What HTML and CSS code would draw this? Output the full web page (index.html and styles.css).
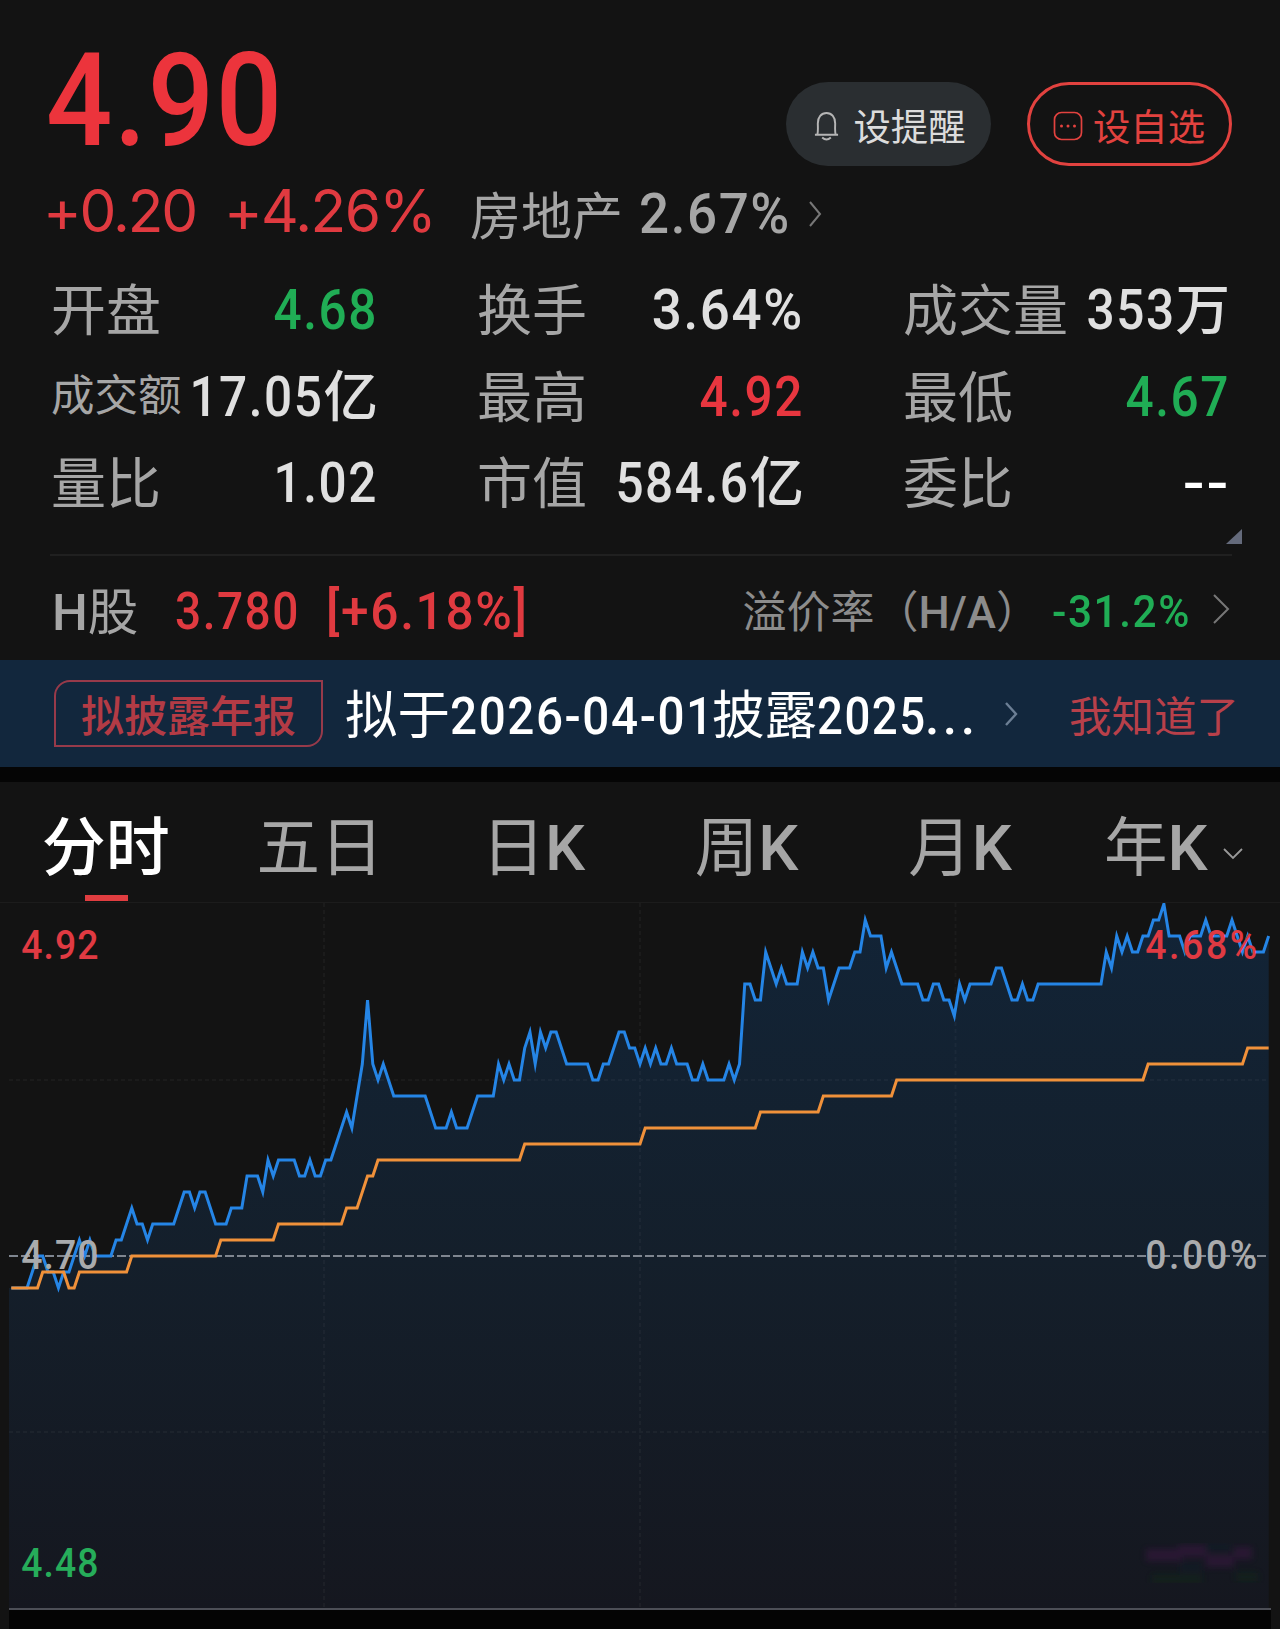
FILE: index.html
```
<!DOCTYPE html>
<html lang="zh-CN">
<head>
<meta charset="utf-8">
<title>行情</title>
<link rel="stylesheet" href="styles.css">
</head>
<body>
<main class="quote">
  <header class="summary">
    <div class="price num">4.90</div>
    <div class="actions">
      <button class="pill pill-solid">
        <svg class="bell" viewBox="0 0 28 32"><path d="M2 24.5H26M4.5 24.5C5.500 21 5 17 5 12.500C5 6.500 8.500 2 14 2S23 6.500 23 12.500C23 17 22.500 21 23.500 24.500M9.500 27.500Q14 31.500 18.500 27.500" fill="none" stroke="currentColor" stroke-width="2"/></svg>
        <span>设提醒</span>
      </button>
      <button class="pill pill-outline">
        <svg class="box" viewBox="0 0 30 30"><rect x="1.500" y="1.500" width="27" height="27" rx="7" fill="none" stroke="currentColor" stroke-width="1.700"/><g fill="currentColor"><circle cx="8.500" cy="15" r="1.500"/><circle cx="15" cy="15" r="1.500"/><circle cx="21.500" cy="15" r="1.500"/></g></svg>
        <span>设自选</span>
      </button>
    </div>
  </header>
  <div class="change-row">
    <span class="change">+0.20</span>
    <span class="change change-pct">+4.26%</span>
    <span class="sector">房地产</span>
    <span class="sector-val num">2.67%</span>
    <svg class="sector-arrow" viewBox="0 0 14 28"><path d="M2 2L12 14L2 26" fill="none" stroke="#777" stroke-width="2"/></svg>
  </div>

  <section class="stats">
    <div class="stat"><span class="label">开盘</span><span class="value down"><span class="num fig">4.68</span></span></div>
    <div class="stat"><span class="label">换手</span><span class="value"><span class="num fig fig-pct">3.64%</span></span></div>
    <div class="stat"><span class="label">成交量</span><span class="value"><span class="num fig">353</span>万</span></div>
    <div class="stat"><span class="label label-small">成交额</span><span class="value"><span class="num fig">17.05</span>亿</span></div>
    <div class="stat"><span class="label">最高</span><span class="value up"><span class="num fig">4.92</span></span></div>
    <div class="stat"><span class="label">最低</span><span class="value down"><span class="num fig">4.67</span></span></div>
    <div class="stat"><span class="label">量比</span><span class="value"><span class="num fig">1.02</span></span></div>
    <div class="stat"><span class="label">市值</span><span class="value"><span class="num fig">584.6</span>亿</span></div>
    <div class="stat"><span class="label">委比</span><span class="value dashes"><span class="num fig">--</span></span></div>
  </section>
  <div class="expand"><svg viewBox="0 0 16 15"><path d="M16 0V15H0Z" fill="#646a7b"/></svg></div>

  <section class="hshare">
    <span class="h-name"><b>H</b>股</span>
    <span class="h-price num">3.780</span>
    <span class="h-pct num">[+6.18%]</span>
    <span class="h-label">溢价率（<b>H/A</b>）</span>
    <span class="h-prem num">-31.2%</span>
    <svg class="h-arrow" viewBox="0 0 18 32"><path d="M2 2L16 16L2 30" fill="none" stroke="#777" stroke-width="2"/></svg>
  </section>

  <section class="notice">
    <span class="tag">拟披露年报</span>
    <span class="message">拟于<span class="num date">2026-04-01</span>披露<span class="num year">2025</span><span class="dots">...</span></span>
    <svg class="n-arrow" viewBox="0 0 14 26"><path d="M2 2L12 13L2 24" fill="none" stroke="#6c7f95" stroke-width="2.400"/></svg>
    <span class="dismiss">我知道了</span>
  </section>

  <nav class="tabs">
    <span class="tab active">分时</span>
    <span class="tab">五日</span>
    <span class="tab">日<b>K</b></span>
    <span class="tab">周<b>K</b></span>
    <span class="tab">月<b>K</b></span>
    <span class="tab">年<b>K</b><svg class="caret" viewBox="0 0 20 12"><path d="M1 1L10 10L19 1" fill="none" stroke="#999" stroke-width="1.800"/></svg></span>
  </nav>

  <svg class="chart" viewBox="0 0 1280 726">
    <defs>
      <linearGradient id="fill" gradientUnits="userSpaceOnUse" x1="0" y1="0" x2="0" y2="706">
        <stop offset="0" stop-color="#122437"/>
        <stop offset=".5" stop-color="#141f2b"/>
        <stop offset="1" stop-color="#15171f"/>
      </linearGradient>
      <filter id="soft"><feGaussianBlur stdDeviation="3"/></filter>
    </defs>
    <path class="area" fill="url(#fill)" d=""/>
    <path class="grid" d="M9 177H1268M9 529H1268M324 0V706M640 0V706M955.500 0V706"/>
    <path class="zero" d="M9 353H1269"/>
    <g transform="translate(11.300 353) scale(5.239 -16)">
      <polyline class="line price-line" points=""/>
    </g>
    <g class="axis" transform="scale(.9 1)">
      <text class="up" x="23.500" y="56" textLength="86">4.92</text>
      <text class="up" x="1272.500" y="56" textLength="124.500">4.68%</text>
      <text x="23.500" y="366" textLength="86">4.70</text>
      <text x="1272.500" y="366" textLength="124.500">0.00%</text>
      <text class="down" x="23.500" y="674.500" textLength="86">4.48</text>
    </g>
    <g transform="translate(11.300 353) scale(5.239 -16)">
      <polyline class="line avg-line" points="0,-2 5,-2 6,-1 10,-1 11,-2 12,-2 13,-1 22,-1 23,0 39,0 40,1 50,1 51,2 63,2 64,3 66,3 68,5 69,5 70,6 97,6 98,7 120,7 121,8 142,8 143,9 154,9 155,10 168,10 169,11 216,11 217,12 235,12 236,13 240,13"/>
    </g>
    <g class="smudge" filter="url(#soft)">
      <path d="M1146 652h36M1206 658h28M1178 648h30M1234 650h18" stroke="#4a1850" stroke-width="12"/>
      <path d="M1152 676h50M1236 674h22" stroke="#0d3318" stroke-width="8"/>
      <path d="M1180 664h22M1205 644h26" stroke="#0a1a2c" stroke-width="10"/>
    </g>
    <path d="M9 707H1271V726H9Z" fill="#040404"/>
    <path d="M9 706H1271" stroke="#4c4e56" stroke-width="2"/>
  </svg>
</main>
<script src="chart.js"></script>
</body>
</html>
```
FILE: chart.js
```
// Intraday price: [minute, cents above previous close]
const price = [
  [0,-2],[3,-2],[5,0],[6,0],[7,-1],[8,-1],[9,-2],[10,-1],[11,-1],[13,1],[14,0],[15,1],[16,0],[19,0],
  [20,1],[21,1],[23,3],[24,2],[25,2],[26,1],[27,2],[31,2],[33,4],[34,4],[35,3],[36,4],[37,4],[39,2],
  [41,2],[42,3],[44,3],[45,5],[47,5],[48,4],[49,6],[50,5],[51,6],[54,6],[55,5],[56,5],[57,6],[58,5],
  [59,5],[60,6],[61,6],[64,9],[65,8],[66,10],[67,12],[68,16],[69,12],[70,11],[71,12],[73,10],[79,10],
  [81,8],[83,8],[84,9],[85,8],[87,8],[89,10],[92,10],[93,12],[94,11],[95,12],[96,11],[97,11],[98,13],
  [99,14],[100,12],[101,14],[102,13],[103,14],[104,14],[106,12],[110,12],[111,11],[112,11],[113,12],
  [114,12],[116,14],[117,14],[118,13],[119,13],[120,12],[121,13],[122,12],[123,13],[124,12],[125,12],
  [126,13],[127,12],[129,12],[130,11],[131,11],[132,12],[133,11],[136,11],[137,12],[138,11],[139,12],
  [140,17],[141,17],[142,16],[143,16],[144,19],[146,17],[147,18],[148,17],[150,17],[151,19],[152,18],
  [153,19],[154,18],[155,18],[156,16],[158,18],[160,18],[161,19],[162,19],[163,21],[164,20],[166,20],
  [167,18],[168,19],[170,17],[173,17],[174,16],[175,16],[176,17],[177,17],[178,16],[179,16],[180,15],
  [181,17],[182,16],[183,17],[187,17],[188,18],[189,18],[191,16],[192,16],[193,17],[194,16],[195,16],
  [196,17],[208,17],[209,19],[210,18],[211,20],[212,19],[213,20],[214,19],[215,19],[216,20],[217,20],
  [218,21],[219,21],[220,22],[221,20],[223,20],[224,19],[225,20],[227,20],[228,21],[229,20],[232,20],
  [233,21],[234,20],[235,19],[236,20],[237,19],[239,19],[240,20]
];
const outline = price.map(([m, c]) => `${(11.3 + m * 5.239).toFixed(1)} ${353 - 16 * c}`).join('L');
document.querySelector('.price-line').setAttribute('points', price.map(p => p.join(',')).join(' '));
document.querySelector('.area').setAttribute('d', `M9 706V385L${outline}V706Z`);
```
FILE: styles.css
```
* { box-sizing: border-box; }
body {
  margin: 0;
  background: #131313;
  color: #a6a6a6;
  font-family: Roboto, "Noto Sans CJK SC", sans-serif;
}
.quote { width: 1280px; height: 1629px; overflow: hidden; }
svg { display: block; flex: none; }
b { font-weight: 500; }
/* Narrow, evenly spaced figures */
.num { display: inline-block; flex: none; font-weight: 500; letter-spacing: 1.7px; transform: scaleX(.885); transform-origin: left; }
.up { color: #e8363f; }
.down { color: #20ad55; }

.summary { display: flex; justify-content: space-between; height: 180px; padding: 36px 48px 0 46px; }
.price { font-size: 129px; line-height: 129px; color: #ec343c; transform: scaleX(.905); }
.actions { display: flex; gap: 36px; padding-top: 46px; }
.pill {
  display: flex; align-items: center; justify-content: center; gap: 13px;
  width: 205px; height: 84px; padding: 5px 0 0 2px; border: 0; border-radius: 42px;
  font: 37.4px/50px Roboto, "Noto Sans CJK SC", sans-serif;
}
.pill span { padding-top: 3px; }
.pill-solid { background: #2a2e31; color: #dcdcdc; }
.pill-outline { background: none; border: 3px solid #e2423f; color: #e2423f; gap: 10px; padding: 4px 1px 0 0; }
.bell { width: 27px; height: 31px; color: #b5b5b5; }
.box { width: 30px; height: 30px; }

.change-row { display: flex; align-items: flex-start; height: 87px; padding-left: 43px; white-space: nowrap; }
.change { font: 400 58.5px/61px Inter, sans-serif; letter-spacing: -2.1px; color: #e03a40; width: 181px; }
.change-pct { width: 246px; letter-spacing: -1.6px; }
.sector { font-size: 51px; line-height: 76px; width: 169px; }
.sector-val { font-size: 56px; line-height: 69px; width: 151px; transform: scaleX(.945); }
.sector-arrow { width: 14px; height: 28px; margin: 20px 0 0 18px; }

.stats { display: grid; grid-template-columns: repeat(3, 324px); column-gap: 102px; grid-auto-rows: 86.5px; padding-left: 51px; height: 260px; }
.stat { display: flex; justify-content: space-between; align-items: center; white-space: nowrap; line-height: 86px; }
.label { font-size: 55px; padding-top: 2px; }
.label-small { font-size: 43.5px; padding-top: 1px; }
.value { font-size: 54.5px; font-weight: 500; color: #e0e0e0; margin-right: -3px; }
.value .fig { font-size: 56px; transform-origin: right; margin-left: -24px; }
.value .fig-pct { transform: scaleX(.945); }
.value.up { color: #e8363f; }
.value.down { color: #20ad55; }
.value.dashes { color: #fff; }
.value.dashes .fig { transform: scaleX(1.15); }
.expand { display: flex; justify-content: flex-end; margin: 0 48px 0 50px; height: 29px; border-bottom: 2px solid #202020; }
.expand svg { width: 16px; height: 15px; margin: 2px -10px 0 0; }

.hshare { display: flex; align-items: center; height: 104px; padding: 6px 50px 0 52px; white-space: nowrap; }
.h-name { font-size: 50.5px; width: 123px; padding-bottom: 6px; }
.h-price { font-size: 52px; width: 151px; color: #e03a40; }
.h-pct { font-size: 52px; color: #e03a40; transform: scaleX(.955); }
.h-label { font-size: 44px; margin-left: auto; margin-right: 12px; padding-bottom: 4px; color: #8c8c8c; }
.h-prem { font-size: 45px; color: #20ad55; width: 140px; transform: scaleX(.94); }
.h-arrow { width: 18px; height: 32px; margin: -5px 0 0 20px; }

.notice { display: flex; align-items: center; height: 107px; padding: 0 41px 0 54px; background: #12273d; white-space: nowrap; }
.tag {
  flex: none; width: 269px; height: 67px; padding-top: 5px; border: 2px solid #973a4a; border-radius: 16px 0 16px 0;
  font-size: 43px; font-weight: 500; line-height: 60px; text-align: center; color: #b33b45;
}
.message { flex: none; width: 640px; font-size: 52.5px; line-height: 60px; padding-top: 6px; margin-left: 22px; color: #fff; }
.message .num, .dots { font-size: 51.5px; }
.message .date { width: 262px; transform: scaleX(.925); }
.message .year { width: 108px; }
.dots { letter-spacing: 3.5px; font-weight: 500; }
.n-arrow { width: 14px; height: 26px; margin-left: 19px; }
.dismiss { flex: none; font-size: 42.5px; margin-left: auto; color: #b8404a; }

.tabs { display: grid; grid-template-columns: repeat(6, 1fr); height: 136px; padding-top: 8px; border-top: 15px solid #050505; border-bottom: 1px solid #1c1c1c; line-height: 116px; }
.tab { display: flex; justify-content: center; align-items: center; font-size: 63.5px; height: 112px; padding-top: 5px; }
.active { position: relative; color: #fff; font-weight: 500; font-size: 64px; padding-right: 2px; }
.active::after { content: ""; position: absolute; left: 85px; bottom: 1px; width: 43px; height: 6px; background: #e03d40; }
.caret { width: 20px; height: 12px; margin: 10px 0 0 15px; }

.chart { width: 1280px; height: 726px; }
.grid { stroke: #fff; stroke-opacity: .035; stroke-width: 2; stroke-dasharray: 4 3; fill: none; }
.zero { stroke: #7f8690; stroke-width: 1.800; stroke-dasharray: 9 3; }
.line { fill: none; stroke-width: 3; vector-effect: non-scaling-stroke; stroke-miterlimit: 10; }
.price-line { stroke: #2585e6; }
.avg-line { stroke: #f0913a; }
.axis text { font-size: 41.500px; font-weight: 500; fill: #a9abad; }
.axis .up { fill: #e03a42; }
.axis .down { fill: #26ad5a; }
.smudge { fill: none; opacity: .4; }
```
